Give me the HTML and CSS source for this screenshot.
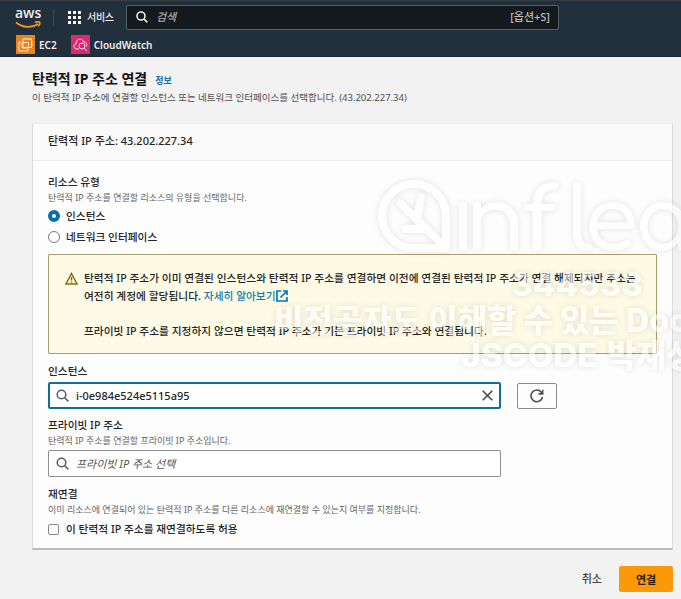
FILE: index.html
```html
<!DOCTYPE html>
<html lang="ko">
<head>
<meta charset="utf-8">
<title>탄력적 IP 주소 연결</title>
<link rel="stylesheet" href="styles.css">
</head>
<body>
<div class="page">
  <header class="top">
    <div class="nav">
      <div class="logo"><span>aws</span>
        <svg width="26" height="8" viewBox="0 0 26 8" fill="none" stroke="#f79a1c" stroke-width="1.6"><path d="M1 1.5C8 7 17 7.200 23 3"/><path d="M20 1.500c2-.8 4-.8 4.600-.3.500.8-.2 2.800-1.400 4"/></svg>
      </div>
      <span class="rule"></span>
      <svg class="grid" width="13" height="13" viewBox="0 0 13 13" fill="#fff"><path d="M0 0h3v3H0zM5 0h3v3H5zM10 0h3v3h-3zM0 5h3v3H0zM5 5h3v3H5zM10 5h3v3h-3zM0 10h3v3H0zM5 10h3v3H5zM10 10h3v3h-3z"/></svg>
      <span class="service">서비스</span>
      <div class="search">
        <svg width="12" height="12" viewBox="0 0 12 12" fill="none" stroke="#eee" stroke-width="1.6"><circle cx="5" cy="5" r="4"/><path d="M8 8l3.400 3.400"/></svg>
        <em>검색</em><span class="hint">[옵션+S]</span>
      </div>
    </div>
    <div class="favorites">
      <svg class="orange" width="19" height="19" viewBox="0 0 19 19" fill="none" stroke="#ffe5c5" stroke-width="1"><path d="M7 4h8.500v8.500H7zM5 7H3v9h9v-2M6 7.500h6.500V13H6zM9 4V3M13 4V3M16 7h1M16 10h1"/></svg>
      <span>EC2</span>
      <svg class="pink" width="19" height="19" viewBox="0 0 19 19" fill="none" stroke="#ffd4e5" stroke-width="1"><path d="M8 14H6c-4 0-4-5-.8-5.300C5 3 12 3 12.500 7c3-.5 4 3 2.800 4.500"/><circle cx="11" cy="11" r="3"/><path d="M13 13l3 3"/></svg>
      <span>CloudWatch</span>
    </div>
  </header>
  <main>
    <div class="title"><h1>탄력적 IP 주소 연결</h1><a>정보</a></div>
    <p class="intro">이 탄력적 IP 주소에 연결할 인스턴스 또는 네트워크 인터페이스를 선택합니다. (43.202.227.34)</p>
    <section class="card">
      <h2>탄력적 IP 주소: <span>43.202.227.34</span></h2>
      <div class="form">
        <div class="label">리소스 유형</div>
        <div class="desc">탄력적 IP 주소를 연결할 리소스의 유형을 선택합니다.</div>
        <div class="choice"><i class="radio on"></i><span>인스턴스</span></div>
        <div class="choice second"><i class="radio"></i><span>네트워크 인터페이스</span></div>
        <div class="alert">
          <svg width="13" height="13" viewBox="0 0 13 13" fill="none" stroke="#8a6b14" stroke-width="1.500"><path d="M6.500 1.500L12 12H1zM6.500 5v3.500M6.500 9.500v1.300"/></svg>
          <div>
            <p class="a1">탄력적 IP 주소가 이미 연결된 인스턴스와 탄력적 IP 주소를 연결하면 이전에 연결된 탄력적 IP 주소가 연결 해제되지만 주소는</p>
            <p>여전히 계정에 할당됩니다. <a>자세히 알아보기<svg width="12" height="12" viewBox="0 0 12 12" fill="none" stroke="#0877b5" stroke-width="1.700"><path d="M5 1H1v10h10V7M7 1h4v4M11 1L4.500 7.500"/></svg></a></p>
            <p class="gap">프라이빗 IP 주소를 지정하지 않으면 탄력적 IP 주소가 기본 프라이빗 IP 주소와 연결됩니다.</p>
          </div>
        </div>
        <div class="label">인스턴스</div>
        <div class="row">
          <div class="field active">
            <svg width="13" height="13" viewBox="0 0 13 13" fill="none" stroke="#555f60" stroke-width="1.500"><circle cx="5.500" cy="5.500" r="4.300"/><path d="M8.700 8.700l3.700 3.700"/></svg>
            <span>i-0e984e524e5115a95</span>
            <svg class="clear" width="11" height="11" viewBox="0 0 11 11" stroke="#444" stroke-width="1.500"><path d="M.7.7l9.600 9.600M10.300.7L.7 10.300"/></svg>
          </div>
          <div class="refresh"><svg width="14" height="14" viewBox="0 0 14 14" fill="none" stroke="#505050" stroke-width="1.600"><path d="M12.500 8A5.800 5.800 0 1 1 11.300 3.200L12.600 4.500M12.700.7v4.200H8.500"/></svg></div>
        </div>
        <div class="label private">프라이빗 IP 주소</div>
        <div class="desc d2">탄력적 IP 주소를 연결할 프라이빗 IP 주소입니다.</div>
        <div class="field">
          <svg width="13" height="13" viewBox="0 0 13 13" fill="none" stroke="#555f60" stroke-width="1.500"><circle cx="5.500" cy="5.500" r="4.300"/><path d="M8.700 8.700l3.700 3.700"/></svg>
          <em>프라이빗 IP 주소 선택</em>
        </div>
        <div class="label again">재연결</div>
        <div class="desc d3">이미 리소스에 연결되어 있는 탄력적 IP 주소를 다른 리소스에 재연결할 수 있는지 여부를 지정합니다.</div>
        <div class="choice check"><i class="box"></i><span>이 탄력적 IP 주소를 재연결하도록 허용</span></div>
      </div>
    </section>
    <div class="actions"><span>취소</span><button>연결</button></div>
  </main>
  <svg class="watermark" width="681" height="599" viewBox="0 0 681 599">
    <g class="mark" fill="none" stroke="#fff" stroke-width="8"><path d="M446 248V214A32 32 0 1 0 414 248H446L401 204M417 218l4-20M406 229h21" stroke-linecap="round"/></g>
    <g class="brand"><text x="450" y="251" textLength="20">ı</text><text x="465" y="251" textLength="60" lengthAdjust="spacingAndGlyphs">n</text><text x="522" y="251" textLength="36" lengthAdjust="spacingAndGlyphs">f</text><text x="567" y="251">l</text><text x="584" y="251" textLength="54" lengthAdjust="spacingAndGlyphs">e</text><text x="635" y="251" textLength="56" lengthAdjust="spacingAndGlyphs">a</text></g>
    <g class="caption"><text x="511" y="296" textLength="132" lengthAdjust="spacingAndGlyphs">344533</text><text x="274" y="332" textLength="345" lengthAdjust="spacingAndGlyphs">비전공자도 이해할 수 있는</text><text x="626" y="332">Docker</text><text x="461" y="367" textLength="137" lengthAdjust="spacingAndGlyphs">JSCODE</text><text x="607" y="367">박재성</text></g>
  </svg>
</div>
</body>
</html>
```
FILE: styles.css
```css
* { box-sizing: border-box; }
body { margin: 0; }
p, h1, h2 { margin: 0; }
svg { flex: none; display: block; }
.page {
  position: relative; width: 681px; height: 599px; overflow: hidden;
  background: #f2f2f2; color: #252525; white-space: nowrap;
  font: 500 11px/18px "Noto Sans", "Noto Sans CJK KR", sans-serif;
}
.top { height: 57px; background: #222f3d; color: #eee; border-top: 1px solid #343c42; border-bottom: 1px solid #1c2935; }
.nav { display: flex; align-items: center; height: 32px; padding-left: 15px; }
.logo { width: 26px; height: 21px; }
.logo span { display: block; height: 14px; font: 600 14px/12px "Open Sans", sans-serif; }
.rule { width: 1px; height: 17px; margin: 0 14px 0 12px; background: #3c4956; }
.service { width: 39px; margin-left: 6px; font-size: 10px; letter-spacing: -.3px; }
.search { display: flex; align-items: center; width: 433px; height: 25px; padding: 0 8px 0 9px; border: 1px solid #536066; border-radius: 2px; background: #14191e; }
.search em { margin-left: 8px; color: #aaa; }
.hint { margin-left: auto; color: #bbb; }
.favorites { display: flex; align-items: center; height: 23px; padding-left: 16px; font-size: 10px; font-weight: 600; }
.orange { margin-right: 4px; background: #e88320; }
.pink { margin: 0 4px 0 14px; background: #d62d71; }
main { padding: 12px 8px 0 32px; }
.title { display: flex; align-items: center; height: 20px; }
h1 { font-size: 14px; line-height: 20px; font-weight: 700; color: #151515; }
.title a { margin: 4px 0 0 8px; font-size: 9px; font-weight: 600; color: #19719f; }
.intro { height: 18px; font-size: 9.5px; font-weight: 400; color: #505050; }
.card { width: 641px; height: 427px; margin-top: 16px; background: #fdfdfd; border: 1px solid #dcdcdc; border-top-color: #eee; border-bottom: 2px solid #bdbdbd; }
h2 { height: 37px; padding: 0 15px; border-bottom: 1px solid #ececec; background: #fafafa; font-size: 11px; line-height: 34px; font-weight: 500; }
.form { padding: 13px 15px 0; }
.label { height: 16px; font-size: 10.7px; line-height: 16px; }
.desc { height: 16px; font-size: 9px; line-height: 16px; font-weight: 400; color: #666; }
.choice { display: flex; align-items: center; height: 20px; }
.choice span { font-size: 10.7px; }
.second { margin-top: 1px; }
.radio { width: 12px; height: 12px; margin-right: 6px; border: 1px solid #777; border-radius: 50%; background: #fff; }
.radio.on { border: 4px solid #086fab; }
.alert { display: flex; width: 609px; height: 100px; margin: 7px 0 9px; padding: 14px 16px; border: 1px solid #a5a06a; border-radius: 1px; background: #fdfbe6; }
.alert > svg { margin: 3px 6px 0 0; }
.alert p { height: 18px; font-size: 10.73px; }
.alert a { color: #187aaa; }
.alert a svg { display: inline-block; vertical-align: -2px; }
.alert .gap { margin-top: 17px; }
.row { display: flex; gap: 16px; align-items: center; height: 27px; margin-top: 3px; }
.field { display: flex; align-items: center; width: 453px; height: 27px; padding: 0 7px; border: 1px solid #8e8e8e; border-radius: 2px; background: #fff; }
.field.active { border: 2px solid #0c709a; padding: 0 6px; }
.field span, .field em { margin-left: 7px; }
.field em { font-weight: 400; color: #555; }
.clear { margin-left: auto; }
.refresh { display: grid; place-items: center; width: 40px; height: 26px; border: 1px solid #8c8c8c; border-radius: 2px; }
.private { margin-top: 8px; }
.d2 { height: 17px; }
.again { margin-top: 9px; }
.check { margin-top: 1px; }
.box { width: 11px; height: 11px; margin-right: 7px; border: 1px solid #888; border-radius: 2px; }
.actions { display: flex; justify-content: flex-end; align-items: center; gap: 17px; height: 26px; margin-top: 16px; color: #444; }
button { width: 54px; height: 26px; padding: 0; border: 0; border-radius: 2px; background: #fb9908; color: #29200d; font: 700 11px/24px "Noto Sans CJK KR", sans-serif; }
.watermark { position: absolute; left: 0; top: 0; pointer-events: none; opacity: .52; filter: drop-shadow(0 0 3px rgba(0,0,0,.22)); }
.mark path { stroke-linejoin: round; }
.brand { fill: #fff; font: 600 88px Comfortaa, "Open Sans", sans-serif; }
.caption { fill: #fff; font: 800 32px Inter, "Noto Sans CJK KR", sans-serif; }
```
